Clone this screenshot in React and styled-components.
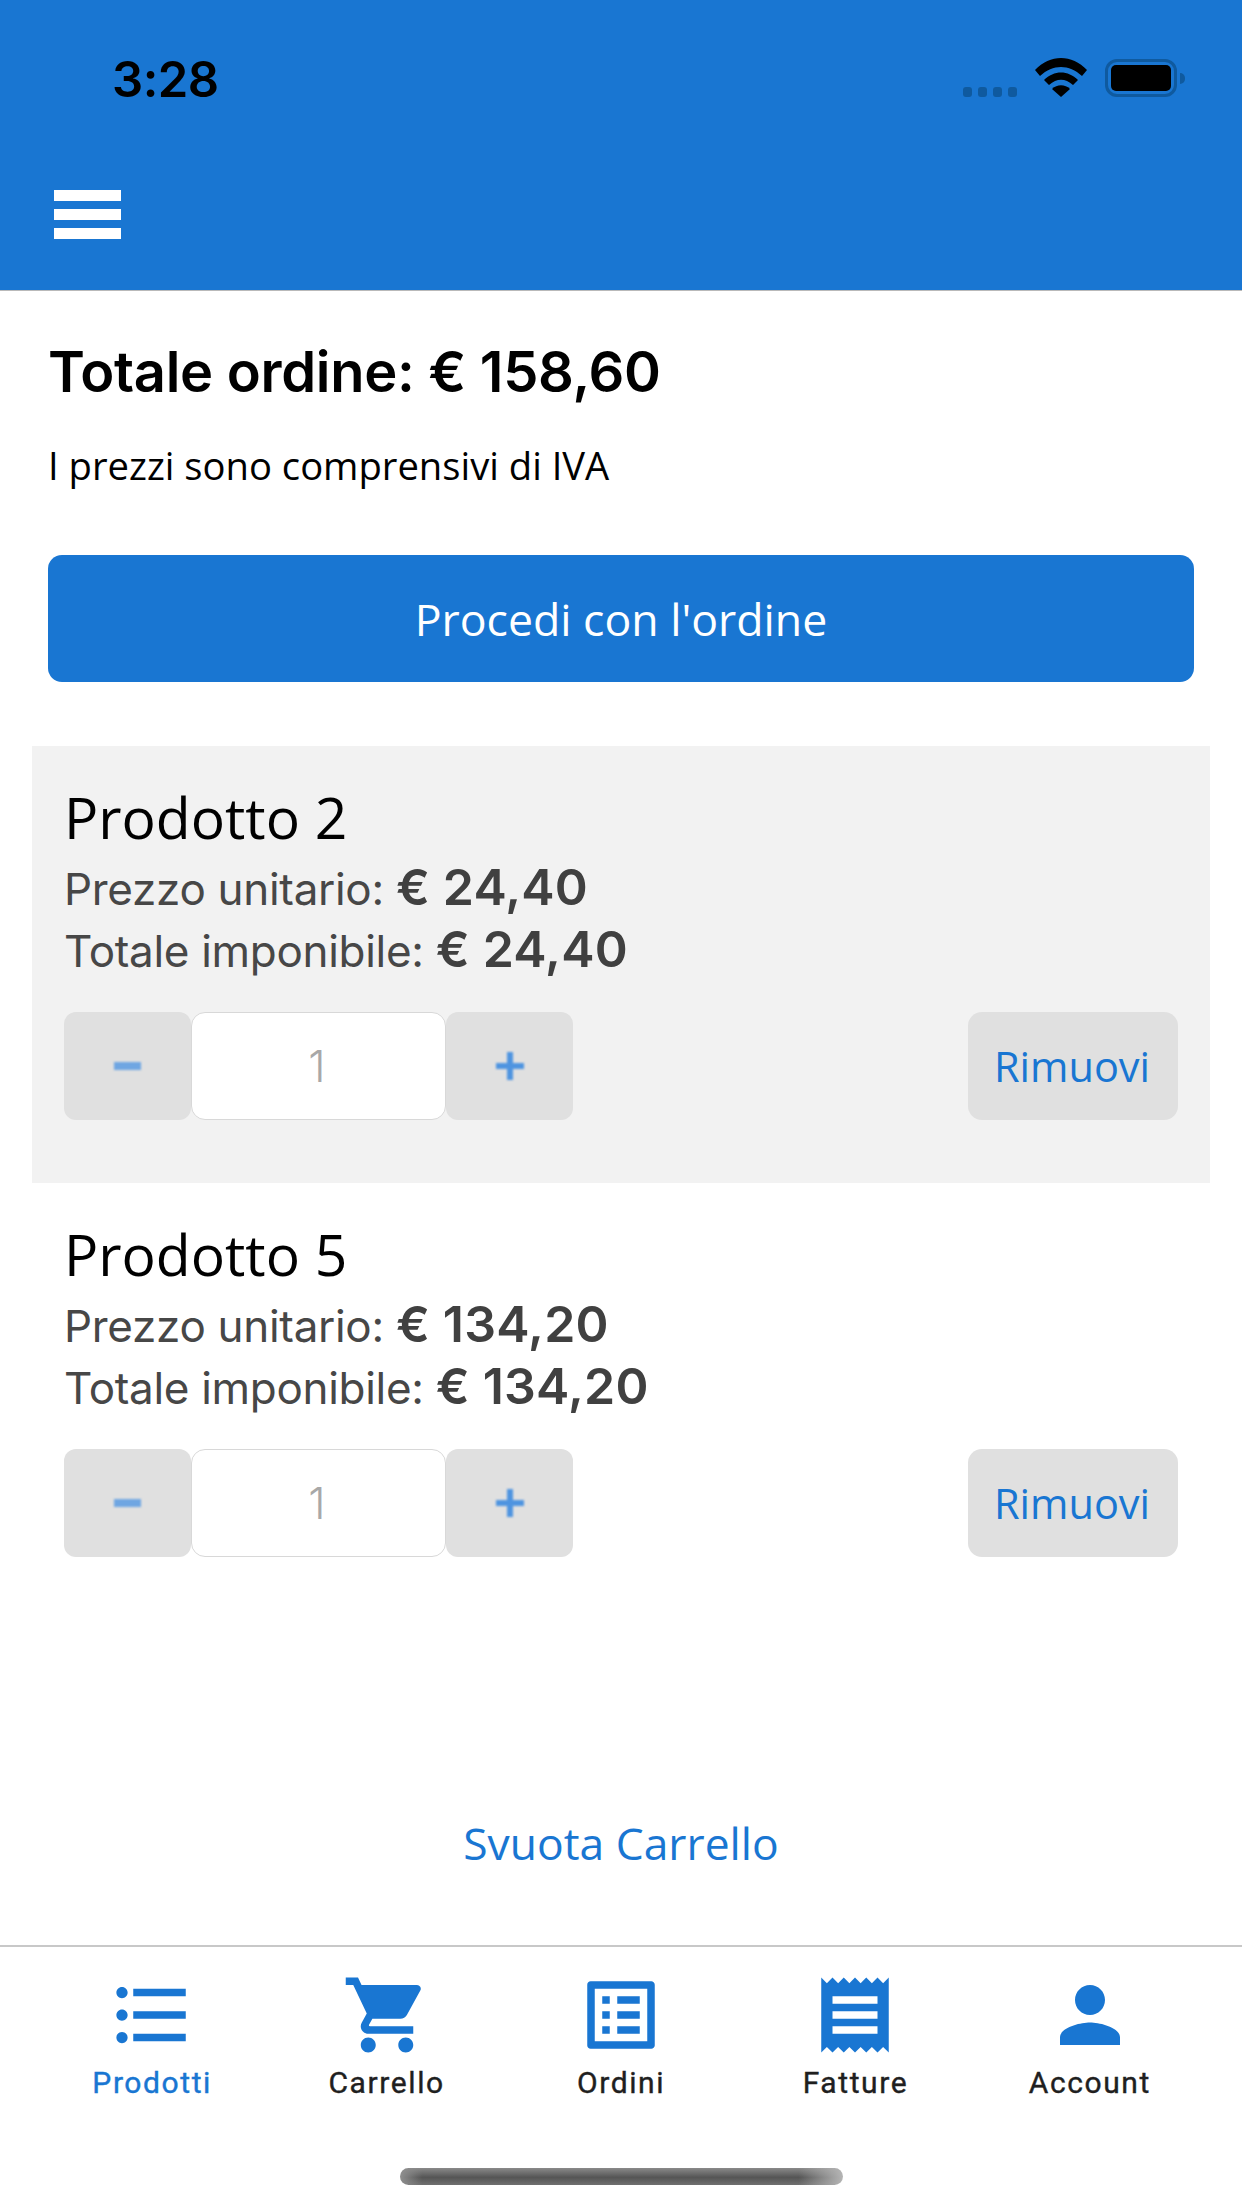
import styled, { createGlobalStyle } from "styled-components";
import {
	MdFormatListBulleted,
	MdShoppingCart,
	MdListAlt,
	MdReceipt,
	MdPerson,
} from "react-icons/md";

const blue = "#1976d2";
const openSans = `"Open Sans", "Noto Sans", sans-serif`;
const inter = `Inter, "Liberation Sans", sans-serif`;

const products = [
	{ name: "Prodotto 2", price: "€ 24,40", shaded: true },
	{ name: "Prodotto 5", price: "€ 134,20", shaded: false },
];

const tabs = [
	{ label: "Prodotti", Icon: MdFormatListBulleted, active: true },
	{ label: "Carrello", Icon: MdShoppingCart },
	{ label: "Ordini", Icon: MdListAlt },
	{ label: "Fatture", Icon: MdReceipt },
	{ label: "Account", Icon: MdPerson },
];

const App = () => {
	return (
		<>
			<GlobalStyle />
			<Screen>
				<Header>
					<StatusBar>
						<Clock>3:28</Clock>
						<StatusIcons>
							<SignalDots>
								<i />
								<i />
								<i />
								<i />
							</SignalDots>
							<WifiIcon viewBox="0 0 52 39">
								<path d="M0 12 C15 -4 37 -4 52 12 L47 18 C34 6 18 6 5 18 Z" />
								<path d="M9 22 C19 12 33 12 43 22 L38 27 C30 20 22 20 14 27 Z" />
								<path d="M17 31 C22 26 30 26 35 31 L26 39 Z" />
							</WifiIcon>
							<Battery>
								<BatteryFill />
							</Battery>
						</StatusIcons>
					</StatusBar>
					<MenuButton>
						<span />
						<span />
						<span />
					</MenuButton>
				</Header>

				<Summary>
					<OrderTotal>Totale ordine: € 158,60</OrderTotal>
					<TaxNote>I prezzi sono comprensivi di IVA</TaxNote>
					<ProceedButton>Procedi con l'ordine</ProceedButton>
				</Summary>

				<ProductList>
					{products.map((p) => (
						<ProductCard key={p.name} $shaded={p.shaded}>
							<ProductName>{p.name}</ProductName>
							<PriceLine>
								Prezzo unitario: <b>{p.price}</b>
							</PriceLine>
							<PriceLine>
								Totale imponibile: <b>{p.price}</b>
							</PriceLine>
							<Controls>
								<Stepper>
									<StepButton>
										<MinusGlyph viewBox="0 0 28 28">
											<rect x="0" y="10" width="27" height="8" />
										</MinusGlyph>
									</StepButton>
									<Quantity>1</Quantity>
									<StepButton>
										<PlusGlyph viewBox="0 0 28 28">
											<path d="M11 0h6v11h11v6H17v11h-6V17H0v-6h11z" />
										</PlusGlyph>
									</StepButton>
								</Stepper>
								<RemoveButton>Rimuovi</RemoveButton>
							</Controls>
						</ProductCard>
					))}
				</ProductList>

				<EmptyCart>Svuota Carrello</EmptyCart>

				<TabBar>
					{tabs.map(({ label, Icon, active }) => (
						<Tab key={label} $active={active}>
							<Icon size={90} color={blue} />
							<span>{label}</span>
						</Tab>
					))}
				</TabBar>

				<HomeBar>
					<HomeIndicator />
				</HomeBar>
			</Screen>
		</>
	);
};

const GlobalStyle = createGlobalStyle`
	html, body {
		margin: 0;
		padding: 0;
		background: #fff;
	}
	* {
		box-sizing: border-box;
	}
	button {
		border: 0;
		padding: 0;
		margin: 0;
		cursor: pointer;
	}
`;

const Screen = styled.div`
	width: 1242px;
	height: 2208px;
	overflow: hidden;
	display: flex;
	flex-direction: column;
	background: #fff;
`;

const Header = styled.header`
	height: 291px;
	flex-shrink: 0;
	background: ${blue};
	border-bottom: 1px solid #b9b9b9;
	display: flex;
	flex-direction: column;
`;

const StatusBar = styled.div`
	height: 190px;
	display: flex;
	justify-content: space-between;
	align-items: flex-start;
	padding: 58px 58px 0 112px;
`;

const Clock = styled.div`
	font-family: ${inter};
	font-size: 49px;
	font-weight: 600;
	line-height: 43px;
	letter-spacing: -0.5px;
	color: #000;
`;

const StatusIcons = styled.div`
	display: flex;
	align-items: flex-end;
	width: 221px;
	height: 39px;
`;

const SignalDots = styled.div`
	display: flex;
	gap: 6px;
	margin-right: 18px;
	i {
		display: block;
		width: 9px;
		height: 10px;
		border-radius: 3px;
		background: #0f5a9f;
	}
`;

const WifiIcon = styled.svg`
	width: 52px;
	height: 39px;
	fill: #000;
	margin-right: 18px;
`;

const Battery = styled.div`
	position: relative;
	width: 72px;
	height: 38px;
	padding: 3px;
	border: 3px solid #0f5a9f;
	border-radius: 12px;
	&::after {
		content: "";
		position: absolute;
		right: -11px;
		top: 11px;
		width: 5px;
		height: 11px;
		background: #0f5a9f;
		border-radius: 0 6px 6px 0;
	}
`;

const BatteryFill = styled.div`
	width: 100%;
	height: 100%;
	background: #000;
	border-radius: 5px;
`;

const MenuButton = styled.div`
	width: 67px;
	margin-left: 54px;
	display: flex;
	flex-direction: column;
	gap: 8px;
	span {
		display: block;
		height: 11px;
		background: #fff;
	}
`;

const Summary = styled.section`
	padding: 0 48px;
	display: flex;
	flex-direction: column;
`;

const OrderTotal = styled.h1`
	margin: 49px 0 0;
	font-family: ${inter};
	font-size: 56px;
	font-weight: 600;
	line-height: 64px;
	letter-spacing: -0.3px;
	color: #000;
`;

const TaxNote = styled.p`
	margin: 36px 0 0;
	font-family: ${openSans};
	font-size: 38.2px;
	line-height: 50px;
	color: #000;
`;

const ProceedButton = styled.button`
	margin-top: 65px;
	height: 127px;
	border-radius: 14px;
	background: ${blue};
	color: #fff;
	font-family: ${openSans};
	font-size: 44.6px;
`;

const ProductList = styled.div`
	margin: 64px 32px 0;
	display: flex;
	flex-direction: column;
`;

const ProductCard = styled.article`
	height: 437px;
	padding: 36px 32px 0;
	background: ${(p) => (p.$shaded ? "#f2f2f2" : "#fff")};
`;

const ProductName = styled.div`
	font-family: ${openSans};
	font-size: 57px;
	line-height: 70px;
	margin-bottom: 6px;
	color: #000;
`;

const PriceLine = styled.div`
	font-family: ${inter};
	font-size: 44px;
	line-height: 62px;
	height: 62px;
	letter-spacing: -0.3px;
	color: #474747;
	b {
		font-size: 50px;
		font-weight: 600;
		line-height: 1;
		letter-spacing: 0.2px;
		color: #404040;
	}
`;

const Controls = styled.div`
	margin-top: 30px;
	display: flex;
	justify-content: space-between;
`;

const Stepper = styled.div`
	display: flex;
`;

const StepButton = styled.button`
	width: 127px;
	height: 108px;
	border-radius: 12px;
	background: #e0e0e0;
	display: flex;
	align-items: center;
	justify-content: center;
`;

const MinusGlyph = styled.svg`
	width: 28px;
	height: 28px;
	fill: #6fa6e2;
	filter: blur(0.8px);
`;

const PlusGlyph = styled(MinusGlyph)`
	fill: #4f94e0;
`;

const Quantity = styled.div`
	width: 255px;
	height: 108px;
	padding-right: 3px;
	background: #fff;
	border: 1px solid #d8d8d8;
	border-radius: 14px;
	display: flex;
	align-items: center;
	justify-content: center;
	font-family: ${inter};
	font-size: 44px;
	font-weight: 300;
	color: #a8a8a8;
`;

const RemoveButton = styled.button`
	width: 210px;
	height: 108px;
	padding-right: 2px;
	border-radius: 14px;
	background: #e0e0e0;
	color: ${blue};
	font-family: ${openSans};
	font-size: 41.5px;
`;

const EmptyCart = styled.button`
	align-self: center;
	margin-top: 193px;
	background: none;
	color: ${blue};
	font-family: ${openSans};
	font-size: 44.4px;
	line-height: 60px;
`;

const TabBar = styled.nav`
	margin-top: 72px;
	height: 223px;
	flex-shrink: 0;
	border-top: 2px solid #c8c8c8;
	padding: 23px 35px 0;
	display: flex;
`;

const Tab = styled.div`
	flex: 1;
	display: flex;
	flex-direction: column;
	align-items: center;
	span {
		margin-top: 5px;
		font-family: Roboto, sans-serif;
		font-size: 30px;
		font-weight: 400;
		line-height: 36px;
		letter-spacing: 1.6px;
		-webkit-text-stroke: 0.4px currentColor;
		color: ${(p) => (p.$active ? blue : "#1f1f1f")};
	}
`;

const HomeBar = styled.div`
	display: flex;
	justify-content: center;
`;

const HomeIndicator = styled.div`
	width: 443px;
	height: 17px;
	border-radius: 9px;
	background:
		linear-gradient(90deg, #8f8f8f 0%, rgba(85, 85, 85, 0) 5%, rgba(85, 85, 85, 0) 90%, #b5b5b5 100%),
		linear-gradient(180deg, #8a8a8a 0%, #555 55%, #707070 100%);
`;

export default App;
